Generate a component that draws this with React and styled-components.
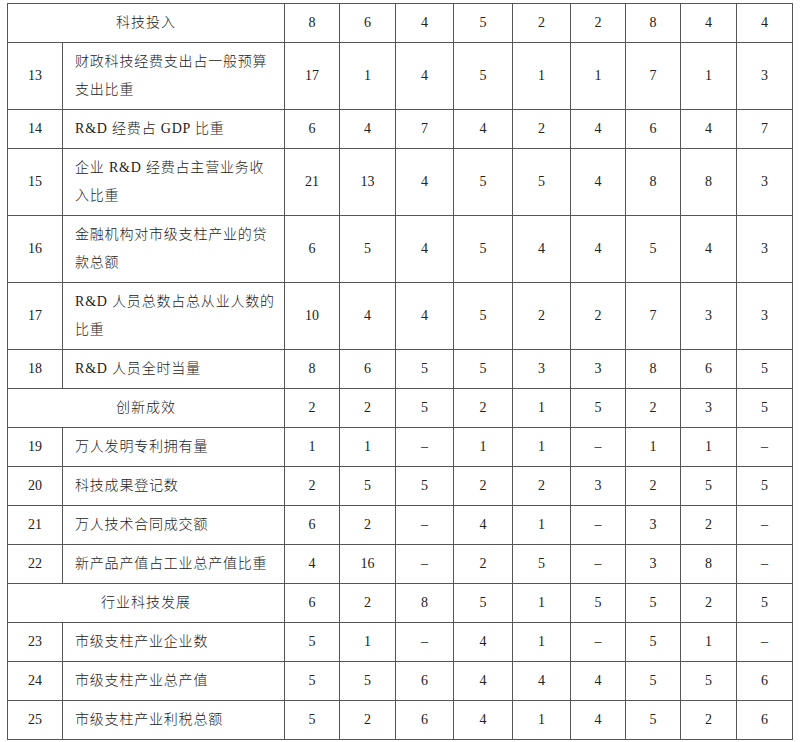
import React from 'react';
import styled, { createGlobalStyle } from 'styled-components';

const GlobalStyle = createGlobalStyle`
  html, body {
    margin: 0;
    padding: 0;
    background: #fff;
  }
`;

const widths = [55, 222, 55, 56, 58, 59, 58, 55, 55, 56, 56];

const rows = [
  { group: '科技投入', values: [8, 6, 4, 5, 2, 2, 8, 4, 4] },
  { no: 13, name: ['财政科技经费支出占一般预算', '支出比重'], values: [17, 1, 4, 5, 1, 1, 7, 1, 3] },
  { no: 14, name: ['R&D 经费占 GDP 比重'], values: [6, 4, 7, 4, 2, 4, 6, 4, 7] },
  { no: 15, name: ['企业 R&D 经费占主营业务收', '入比重'], values: [21, 13, 4, 5, 5, 4, 8, 8, 3] },
  { no: 16, name: ['金融机构对市级支柱产业的贷', '款总额'], values: [6, 5, 4, 5, 4, 4, 5, 4, 3] },
  { no: 17, name: ['R&D 人员总数占总从业人数的', '比重'], values: [10, 4, 4, 5, 2, 2, 7, 3, 3] },
  { no: 18, name: ['R&D 人员全时当量'], values: [8, 6, 5, 5, 3, 3, 8, 6, 5] },
  { group: '创新成效', values: [2, 2, 5, 2, 1, 5, 2, 3, 5] },
  { no: 19, name: ['万人发明专利拥有量'], values: [1, 1, '–', 1, 1, '–', 1, 1, '–'] },
  { no: 20, name: ['科技成果登记数'], values: [2, 5, 5, 2, 2, 3, 2, 5, 5] },
  { no: 21, name: ['万人技术合同成交额'], values: [6, 2, '–', 4, 1, '–', 3, 2, '–'] },
  { no: 22, name: ['新产品产值占工业总产值比重'], values: [4, 16, '–', 2, 5, '–', 3, 8, '–'] },
  { group: '行业科技发展', values: [6, 2, 8, 5, 1, 5, 5, 2, 5] },
  { no: 23, name: ['市级支柱产业企业数'], values: [5, 1, '–', 4, 1, '–', 5, 1, '–'] },
  { no: 24, name: ['市级支柱产业总产值'], values: [5, 5, 6, 4, 4, 4, 5, 5, 6] },
  { no: 25, name: ['市级支柱产业利税总额'], values: [5, 2, 6, 4, 1, 4, 5, 2, 6] },
];

const Page = styled.div`
  padding: 3px 0 0 7px;
`;

const Table = styled.table`
  border-collapse: collapse;
  table-layout: fixed;
  width: 786px;
  color: #222;
  font-family: "Liberation Serif", "Noto Sans CJK SC", serif;
  font-size: 14px;
`;

const Cell = styled.td`
  border: 1px solid #555;
  padding: 5px 0;
  line-height: 28px;
  text-align: ${(p) => (p.$left ? 'left' : 'center')};
  padding-left: ${(p) => (p.$left ? '12px' : '0')};
  vertical-align: middle;
  white-space: nowrap;
`;

const NameText = styled.span`
  font-weight: 300;
  letter-spacing: 0.8px;
`;

const GroupText = styled.span`
  font-weight: 300;
  letter-spacing: 1px;
`;

export default function App() {
  return (
    <Page>
      <GlobalStyle />
      <Table>
        <colgroup>
          {widths.map((w, i) => (
            <col key={i} style={{ width: w }} />
          ))}
        </colgroup>
        <tbody>
          {rows.map((r, i) => (
            <tr key={i}>
              {r.group ? (
                <Cell colSpan={2}>
                  <GroupText>{r.group}</GroupText>
                </Cell>
              ) : (
                <>
                  <Cell>{r.no}</Cell>
                  <Cell $left>
                    <NameText>
                      {r.name.map((line, j) => (
                        <React.Fragment key={j}>
                          {j > 0 && <br />}
                          {line}
                        </React.Fragment>
                      ))}
                    </NameText>
                  </Cell>
                </>
              )}
              {r.values.map((v, j) => (
                <Cell key={j}>{v}</Cell>
              ))}
            </tr>
          ))}
        </tbody>
      </Table>
    </Page>
  );
}
